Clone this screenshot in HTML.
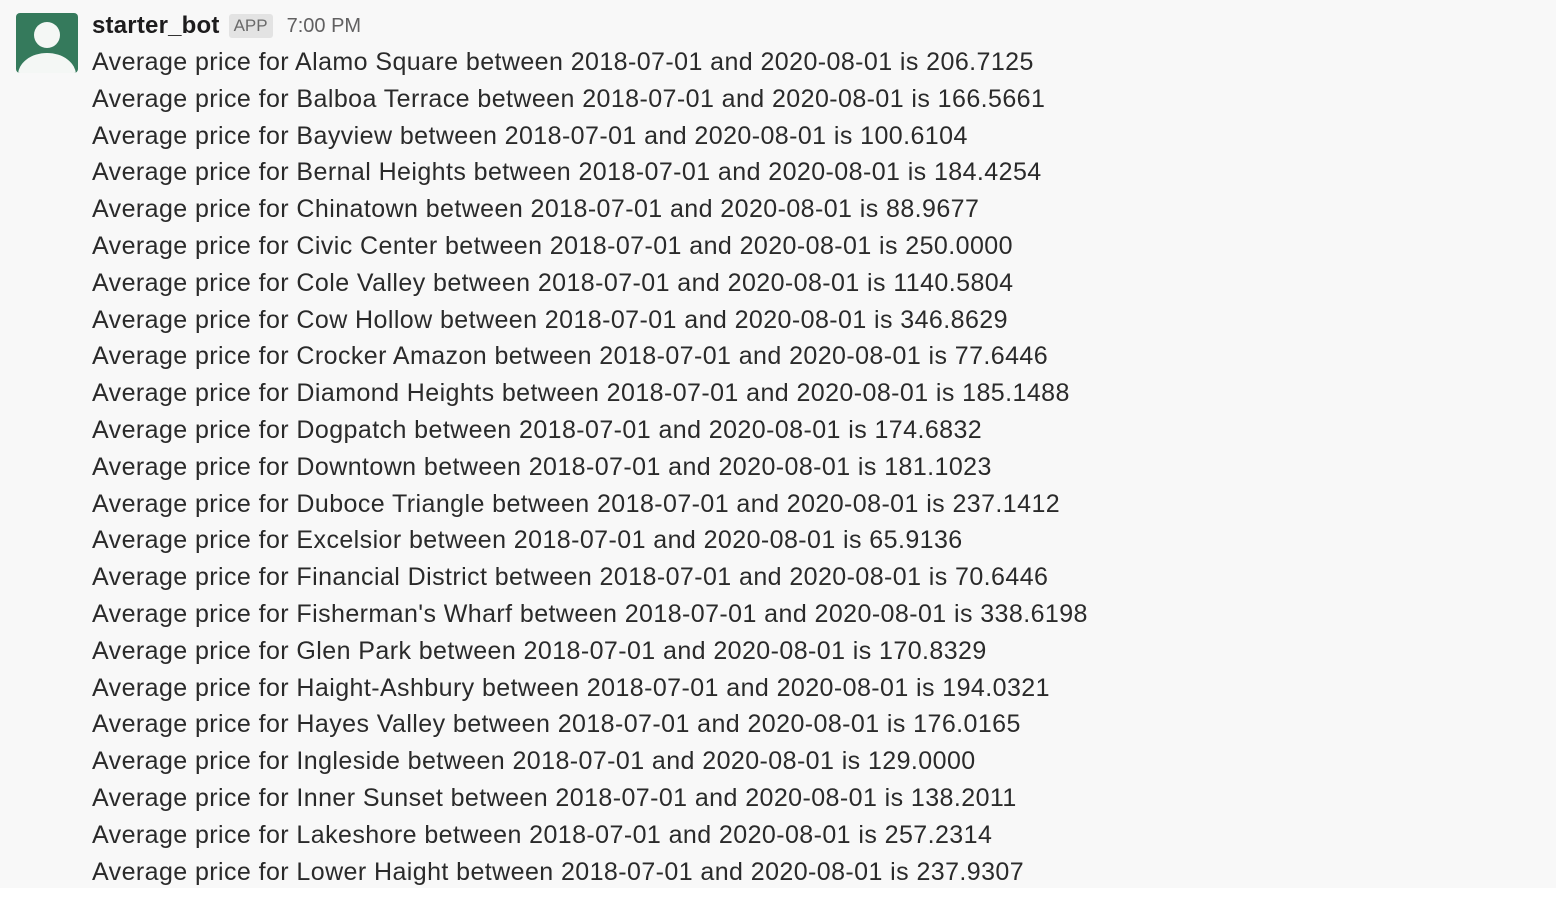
<!DOCTYPE html>
<html><head><meta charset="utf-8"><style>
html,body{margin:0;padding:0;}
body{width:1556px;height:898px;background:#fff;position:relative;overflow:hidden;font-family:"Liberation Sans",sans-serif;}
.bg{position:absolute;left:0;top:0;width:1556px;height:888px;background:#f8f8f8;}
.av{position:absolute;left:16px;top:13px;width:62px;height:60px;background:#357a5c;border-radius:4px;overflow:hidden;}
.av .h{position:absolute;left:18px;top:9px;width:26px;height:26px;border-radius:50%;background:#f4f7f5;}
.av .b{position:absolute;left:2px;top:40px;width:58px;height:44px;border-radius:50% 50% 0 0;background:#f4f7f5;}
.hdr{position:absolute;left:92px;top:12px;height:30px;white-space:nowrap;}
.name{font-weight:bold;font-size:24px;color:#1d1c1d;vertical-align:middle;letter-spacing:0.2px;}
.app{display:inline-block;background:#e3e3e3;color:#6a6a6a;font-size:17px;padding:2px 5px;border-radius:3px;margin-left:9px;vertical-align:middle;}
.time{font-size:20px;color:#616061;margin-left:14px;vertical-align:middle;}
.lines{position:absolute;left:92px;top:44px;font-size:25px;line-height:36.8px;color:#2a2a2a;white-space:nowrap;letter-spacing:0.42px;}
</style></head><body>
<div class="bg"></div>
<div class="av"><div class="h"></div><div class="b"></div></div>
<div class="hdr"><span class="name">starter_bot</span><span class="app">APP</span><span class="time">7:00 PM</span></div>
<div class="lines">
Average price for Alamo Square between 2018-07-01 and 2020-08-01 is 206.7125<br>
Average price for Balboa Terrace between 2018-07-01 and 2020-08-01 is 166.5661<br>
Average price for Bayview between 2018-07-01 and 2020-08-01 is 100.6104<br>
Average price for Bernal Heights between 2018-07-01 and 2020-08-01 is 184.4254<br>
Average price for Chinatown between 2018-07-01 and 2020-08-01 is 88.9677<br>
Average price for Civic Center between 2018-07-01 and 2020-08-01 is 250.0000<br>
Average price for Cole Valley between 2018-07-01 and 2020-08-01 is 1140.5804<br>
Average price for Cow Hollow between 2018-07-01 and 2020-08-01 is 346.8629<br>
Average price for Crocker Amazon between 2018-07-01 and 2020-08-01 is 77.6446<br>
Average price for Diamond Heights between 2018-07-01 and 2020-08-01 is 185.1488<br>
Average price for Dogpatch between 2018-07-01 and 2020-08-01 is 174.6832<br>
Average price for Downtown between 2018-07-01 and 2020-08-01 is 181.1023<br>
Average price for Duboce Triangle between 2018-07-01 and 2020-08-01 is 237.1412<br>
Average price for Excelsior between 2018-07-01 and 2020-08-01 is 65.9136<br>
Average price for Financial District between 2018-07-01 and 2020-08-01 is 70.6446<br>
Average price for Fisherman's Wharf between 2018-07-01 and 2020-08-01 is 338.6198<br>
Average price for Glen Park between 2018-07-01 and 2020-08-01 is 170.8329<br>
Average price for Haight-Ashbury between 2018-07-01 and 2020-08-01 is 194.0321<br>
Average price for Hayes Valley between 2018-07-01 and 2020-08-01 is 176.0165<br>
Average price for Ingleside between 2018-07-01 and 2020-08-01 is 129.0000<br>
Average price for Inner Sunset between 2018-07-01 and 2020-08-01 is 138.2011<br>
Average price for Lakeshore between 2018-07-01 and 2020-08-01 is 257.2314<br>
Average price for Lower Haight between 2018-07-01 and 2020-08-01 is 237.9307
</div>
</body></html>
